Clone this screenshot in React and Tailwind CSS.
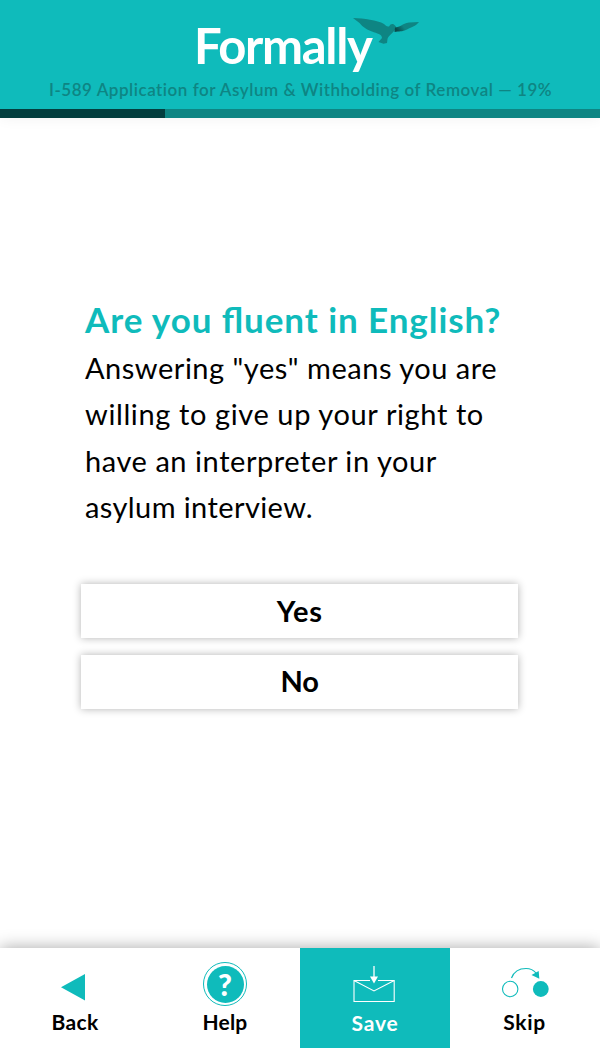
import React from 'react'

const BirdIcon = () => (
  <svg className="absolute left-[352px] top-[17px]" width="68" height="28" viewBox="0 0 68 28">
    <path
      d="M1 1C12 1.500 25 3 32 7C34 8.500 34.500 10 37 9.500L38.500 7.500C40 6.500 42 6.800 43 8.500L45 11L42 14C40 17 36 19 35.500 22L35 26L31.500 26.700L26.500 25L30 21C30 17 25 16.500 20 14.500C13 12 9 8 7.500 6Z"
      fill="#0e8583"
    />
    <path d="M43 10.500C48 10.500 50 6.500 57 5.500L67 5C64 9 60 10 55 12.500C50 15 47 14 42.500 15Z" fill="url(#wing)" />
    <defs>
      <linearGradient id="wing" x1="0" x2="1" y1="0.500" y2="0.200">
        <stop offset="0" stopColor="#0a4b4b" />
        <stop offset="0.350" stopColor="#0e8583" />
      </linearGradient>
    </defs>
  </svg>
)

const BackIcon = () => (
  <svg width="50" height="50" viewBox="0 0 50 50">
    <path d="M11 27.200L35 14V40.500Z" fill="#0fbbbb" />
  </svg>
)

const HelpIcon = () => (
  <div className="flex h-[44px] w-[44px] items-center justify-center rounded-full border border-[#0fbbbb]">
    <div className="flex h-[37px] w-[37px] items-center justify-center rounded-full bg-[#0fbbbb] font-['Lato',sans-serif] text-[30px] font-black leading-none text-white">
      ?
    </div>
  </div>
)

const SaveIcon = () => (
  <svg width="50" height="50" viewBox="0 0 50 50" fill="none" stroke="#fff">
    <path d="M20 20.500H4V41.500H44.200V20.500H28M4 20.500L24 31L44.200 20.500" strokeWidth="1.100" />
    <path d="M24 6V18" strokeWidth="1.300" />
    <path d="M20 16.500H28L24 23.500Z" fill="#fff" stroke="none" />
  </svg>
)

const SkipIcon = () => (
  <svg width="50" height="50" viewBox="0 0 50 50" fill="none" stroke="#0fbbbb">
    <circle cx="10.200" cy="29" r="7.700" strokeWidth="1.100" />
    <circle cx="40.800" cy="29" r="7.900" fill="#0fbbbb" stroke="none" />
    <path d="M11.500 18C14 11.500 20 8.500 26 8.500C31 8.500 34 10.500 36 13" strokeWidth="1.200" />
    <path d="M31.500 15L38.700 11L39.300 18.800Z" fill="#0fbbbb" stroke="none" />
  </svg>
)

const App = () => {
  const lines = [
    { text: 'Answering "yes" means you are', spacing: 'tracking-[0.520px]' },
    { text: 'willing to give up your right to', spacing: 'tracking-[0.610px]' },
    { text: 'have an interpreter in your', spacing: 'tracking-[0.560px]' },
    { text: 'asylum interview.', spacing: 'tracking-[0.400px]' },
  ]

  return (
    <div className="flex h-[1048px] w-[600px] flex-col overflow-hidden bg-white font-['Lato',sans-serif] text-black">
      <header className="relative h-[118px] shrink-0 bg-[#0fbbbb] shadow-[0_0_14px_rgba(0,0,0,0.06)]">
        <div className="flex h-[109px] flex-col pt-[15px]">
          <h1 className="ml-[194px] h-[60px] whitespace-nowrap text-[49px] font-bold leading-[60px] tracking-[-1.300px] text-white">
            Formally
          </h1>
          <p className="mt-[3px] whitespace-nowrap pl-[49px] text-[17px] font-semibold leading-[24px] tracking-[0.530px] text-[#0e8583]">
            I-589 Application for Asylum &amp; Withholding of Removal — 19%
          </p>
        </div>
        <BirdIcon />
        <div className="h-[9px] bg-[#0e8583]">
          <div className="h-full w-[165px] bg-[#033e3e]" />
        </div>
      </header>

      <main className="flex flex-1 flex-col pl-[81px] pt-[175px]">
        <div className="pl-[4px]">
          <h2 className="whitespace-nowrap text-[35px] font-bold leading-[52px] tracking-[0.920px] text-[#0fbbbb] [font-feature-settings:'liga'_1]">
            Are you fluent in English?
          </h2>
          <p className="text-[29px] leading-[46.300px]">
            {lines.map((line) => (
              <span key={line.text} className={`block whitespace-nowrap ${line.spacing}`}>
                {line.text}
              </span>
            ))}
          </p>
        </div>
        <div className="mt-[54px] flex w-[437.400px] flex-col gap-[17px]">
          <button className="h-[54px] bg-white text-[29px] font-bold leading-[54px] tracking-[0.700px] shadow-[0_0_8px_rgba(0,0,0,0.3)]">
            Yes
          </button>
          <button className="h-[54px] bg-white pb-[2px] text-[29px] font-bold leading-[52px] shadow-[0_0_8px_rgba(0,0,0,0.3)]">
            No
          </button>
        </div>
      </main>

      <nav className="grid h-[100px] shrink-0 grid-cols-4 bg-white text-[21px] font-bold leading-[24px] shadow-[0_0_16px_rgba(0,0,0,0.35)]">
        <button className="flex flex-col items-center pt-[12px]">
          <BackIcon />
          <span className="tracking-[0.300px]">Back</span>
        </button>
        <button className="flex flex-col items-center pt-[14px]">
          <HelpIcon />
          <span className="mt-[4px] tracking-[0.200px]">Help</span>
        </button>
        <button className="flex flex-col items-center bg-[#0fbbbb] pt-[12px] text-white">
          <SaveIcon />
          <span className="mt-[1px] tracking-[0.800px]">Save</span>
        </button>
        <button className="flex flex-col items-center pt-[12px]">
          <SkipIcon />
          <span className="pr-px tracking-[0.700px]">Skip</span>
        </button>
      </nav>
    </div>
  )
}

export default App
